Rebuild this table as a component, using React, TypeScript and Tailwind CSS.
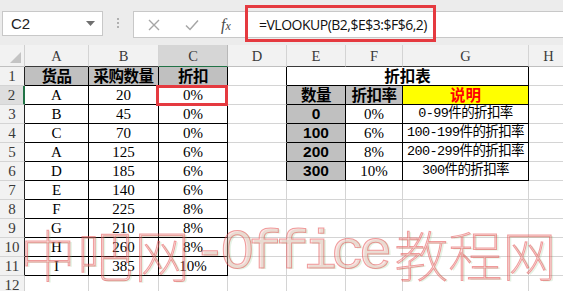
import React from "react";

const leftData: string[][] = [
  ["货品", "采购数量", "折扣"],
  ["A", "20", "0%"],
  ["B", "45", "0%"],
  ["C", "70", "0%"],
  ["A", "125", "6%"],
  ["D", "185", "6%"],
  ["E", "140", "6%"],
  ["F", "225", "8%"],
  ["G", "210", "8%"],
  ["H", "260", "8%"],
  ["I", "385", "10%"],
];

const rightData: string[][] = [
  ["数量", "折扣率", "说明"],
  ["0", "0%", "0-99件的折扣率"],
  ["100", "6%", "100-199件的折扣率"],
  ["200", "8%", "200-299件的折扣率"],
  ["300", "10%", "300件的折扣率"],
];

const colLetters = ["A", "B", "C", "D", "E", "F", "G", "H"];

function inLeft(r: number, c: number) {
  return r >= 1 && r <= 11 && c >= 1 && c <= 3;
}
function inRight(r: number, c: number) {
  return r >= 1 && r <= 6 && c >= 5 && c <= 7;
}
function inT(r: number, c: number) {
  return inLeft(r, c) || inRight(r, c);
}

function cellContent(r: number, c: number): React.ReactNode {
  if (inLeft(r, c)) {
    const v = leftData[r - 1][c - 1];
    if (r === 1) {
      return (
        <span className="font-['Noto_Sans_CJK_SC',sans-serif] font-bold text-[15.5px] tracking-[-0.5px] text-black leading-none">
          {v}
        </span>
      );
    }
    return <span className="font-['Liberation_Serif','Noto_Sans_CJK_SC',serif] text-[15px] text-black leading-none">{v}</span>;
  }
  if (inRight(r, c) && r >= 2) {
    const v = rightData[r - 2][c - 5];
    if (r === 2) {
      if (c === 7)
        return (
          <span className="font-['Noto_Sans_CJK_SC',sans-serif] font-bold text-[15.5px] text-[#ff0000] leading-none">{v}</span>
        );
      return (
        <span className="font-['Noto_Sans_CJK_SC',sans-serif] font-bold text-[15.5px] tracking-[-0.5px] text-black leading-none">
          {v}
        </span>
      );
    }
    if (c === 5)
      return <span className="font-['Liberation_Sans',sans-serif] font-bold text-[15.5px] text-black leading-none">{v}</span>;
    if (c === 6)
      return <span className="font-['Liberation_Serif',serif] text-[15px] text-black leading-none">{v}</span>;
    return (
      <span className="whitespace-nowrap font-['Liberation_Mono','Noto_Sans_CJK_SC',monospace] text-[13.5px] tracking-[-0.6px] text-black leading-none">
        {v}
      </span>
    );
  }
  return null;
}

function cellBg(r: number, c: number) {
  if (inLeft(r, c) && r === 1) return "bg-[#c0c0c0]";
  if (inRight(r, c) && r === 2 && c < 7) return "bg-[#c0c0c0]";
  if (inRight(r, c) && r === 2 && c === 7) return "bg-[#ffff00]";
  if (inRight(r, c) && r >= 3 && c === 5) return "bg-[#c0c0c0]";
  return "bg-white";
}

function XIcon() {
  return (
    <svg width="12" height="12" viewBox="0 0 12 12">
      <path d="M1 1 L11 11 M11 1 L1 11" stroke="#a6a6a6" strokeWidth="1.4" fill="none" />
    </svg>
  );
}
function CheckIcon() {
  return (
    <svg width="14" height="12" viewBox="0 0 14 12">
      <path d="M1 6.5 L5 10.5 L13 1.5" stroke="#a6a6a6" strokeWidth="1.5" fill="none" />
    </svg>
  );
}

export default function App() {
  const rows = Array.from({ length: 12 }, (_, i) => i + 1);
  const cols = [1, 2, 3, 4, 5, 6, 7, 8];

  return (
    <div className="w-[563px] h-[291px] overflow-hidden bg-white relative">
      {/* Top formula area */}
      <div className="h-[45px] bg-[#ececec] flex items-start">
        <div className="ml-[2px] mt-[11px] w-[101px] h-[25px] bg-white border border-[#c8c8c8] flex items-center justify-between pl-[8px] pr-[7px]">
          <span className="font-['Liberation_Sans',sans-serif] text-[15px] text-[#222] leading-none">C2</span>
          <svg width="9" height="6" viewBox="0 0 9 6">
            <path d="M0 0 L9 0 L4.5 5 Z" fill="#6f6f6f" />
          </svg>
        </div>
        <div className="w-[30px] h-[47px] flex flex-col items-center justify-center gap-[2px] pb-[1px]">
          <div className="w-[2px] h-[2px] bg-[#b0b0b0]" />
          <div className="w-[2px] h-[2px] bg-[#b0b0b0]" />
          <div className="w-[2px] h-[2px] bg-[#b0b0b0]" />
        </div>
        <div className="mt-[11px] h-[27px] flex-1 bg-white border border-[#c8c8c8] border-r-0 flex items-center">
          <div className="w-[38px] flex justify-center pl-[1px]">
            <XIcon />
          </div>
          <div className="w-[40px] flex justify-center">
            <CheckIcon />
          </div>
          <div className="w-[28px] flex justify-center">
            <span className="font-['Liberation_Serif',serif] italic text-[16px] text-[#4a4a4a] leading-none">
              f<span className="text-[12px]">x</span>
            </span>
          </div>
          <span className="ml-[19px] font-['Open_Sans','Liberation_Sans',sans-serif] text-[14px] tracking-[-0.5px] text-[#111] leading-none">
            =VLOOKUP(B2,$E$3:$F$6,2)
          </span>
        </div>
      </div>

      {/* red annotation around formula */}
      <div className="absolute left-[245px] top-[5px] w-[191px] h-[37px] border-[3px] border-[#e53a40] z-20 pointer-events-none" />

      {/* Grid */}
      <div className="relative grid grid-cols-[25px_64px_70px_69px_59px_59px_57px_126px_40px] grid-rows-[22px_repeat(12,19px)]">
        {/* header row */}
        <div className="bg-[#f2f2f2] border-r border-b border-r-[#d0d0d0] border-b-[#c0c0c0] relative">
          <svg className="absolute right-[3px] bottom-[3px]" width="11" height="11" viewBox="0 0 11 11">
            <path d="M11 0 L11 11 L0 11 Z" fill="#c4c4c4" />
          </svg>
        </div>
        {colLetters.map((l, i) => {
          const c = i + 1;
          const sel = c === 3;
          const under = inT(1, c);
          return (
            <div
              key={l}
              className={`flex items-center justify-center border-r border-b ${sel ? "bg-[#d6d6d6] border-b-[#217346]" : under ? "bg-[#f2f2f2] border-b-[#3a3a3a]" : "bg-[#f2f2f2] border-b-[#c0c0c0]"} ${sel ? "border-r-[#b8b8b8]" : "border-r-[#d4d4d4]"}`}
            >
              <span className="font-['Liberation_Serif',serif] text-[14.5px] text-[#3a3a3a] leading-none pt-[2px]">{l}</span>
            </div>
          );
        })}

        {rows.map((r) => (
          <React.Fragment key={r}>
            <div
              className={`flex items-center justify-center border-b border-r ${r === 2 ? "bg-[#dedede] border-r-[#217346] border-r-2" : "bg-[#f2f2f2]"} ${r !== 2 && r <= 11 ? "border-r-[#222]" : ""} ${r === 12 ? "border-r-[#d0d0d0]" : ""} border-b-[#d4d4d4]`}
            >
              <span className="font-['Liberation_Serif',serif] text-[15px] text-[#3a3a3a] leading-none">{r}</span>
            </div>
            {cols.map((c) => {
              if (r === 1 && (c === 6 || c === 7)) return null;
              if (r === 1 && c === 5) {
                return (
                  <div
                    key={c}
                    className="col-span-3 bg-white border-r border-b border-r-black border-b-black flex items-center justify-center"
                  >
                    <span className="font-['Noto_Sans_CJK_SC',sans-serif] font-bold text-[15.5px] text-black leading-none">
                      折扣表
                    </span>
                  </div>
                );
              }
              const blackR = inT(r, c) || inT(r, c + 1);
              const blackB = inT(r, c) || inT(r + 1, c);
              const isSel = r === 2 && c === 3;
              return (
                <div
                  key={c}
                  className={`relative flex items-center justify-center border-r border-b ${blackR ? "border-r-black" : "border-r-[#d4d4d4]"} ${blackB ? "border-b-black" : "border-b-[#d4d4d4]"} ${cellBg(r, c)}`}
                >
                  {cellContent(r, c)}
                  {isSel && (
                    <>
                      <div className="absolute left-[-2px] top-[-1px] right-[-1px] bottom-[-1px] border-2 border-[#217346] z-10" />
                      <div className="absolute left-[-3px] top-[-1px] right-[-1px] bottom-[-2px] border-[3px] border-[#e53a40] z-10" />
                    </>
                  )}
                </div>
              );
            })}
          </React.Fragment>
        ))}

        {/* watermark */}
        <div className="absolute left-[20px] top-[180px] z-20 pointer-events-none whitespace-nowrap flex items-end leading-none text-[rgba(245,170,170,0.32)] [-webkit-text-stroke:1px_rgba(225,70,70,0.5)] [text-shadow:2px_1px_0_rgba(120,190,120,0.2)]">
          <span className="font-['Noto_Sans_CJK_SC',serif] text-[56px] font-thin tracking-[1px]">中吧网</span>
          <span className="font-['Liberation_Mono',monospace] text-[56px] tracking-[-6px] ml-[2px]">-Office</span>
          <span className="font-['Noto_Sans_CJK_SC',serif] text-[54px] font-thin tracking-[0px] ml-[8px]">教程网</span>
        </div>
      </div>
    </div>
  );
}
